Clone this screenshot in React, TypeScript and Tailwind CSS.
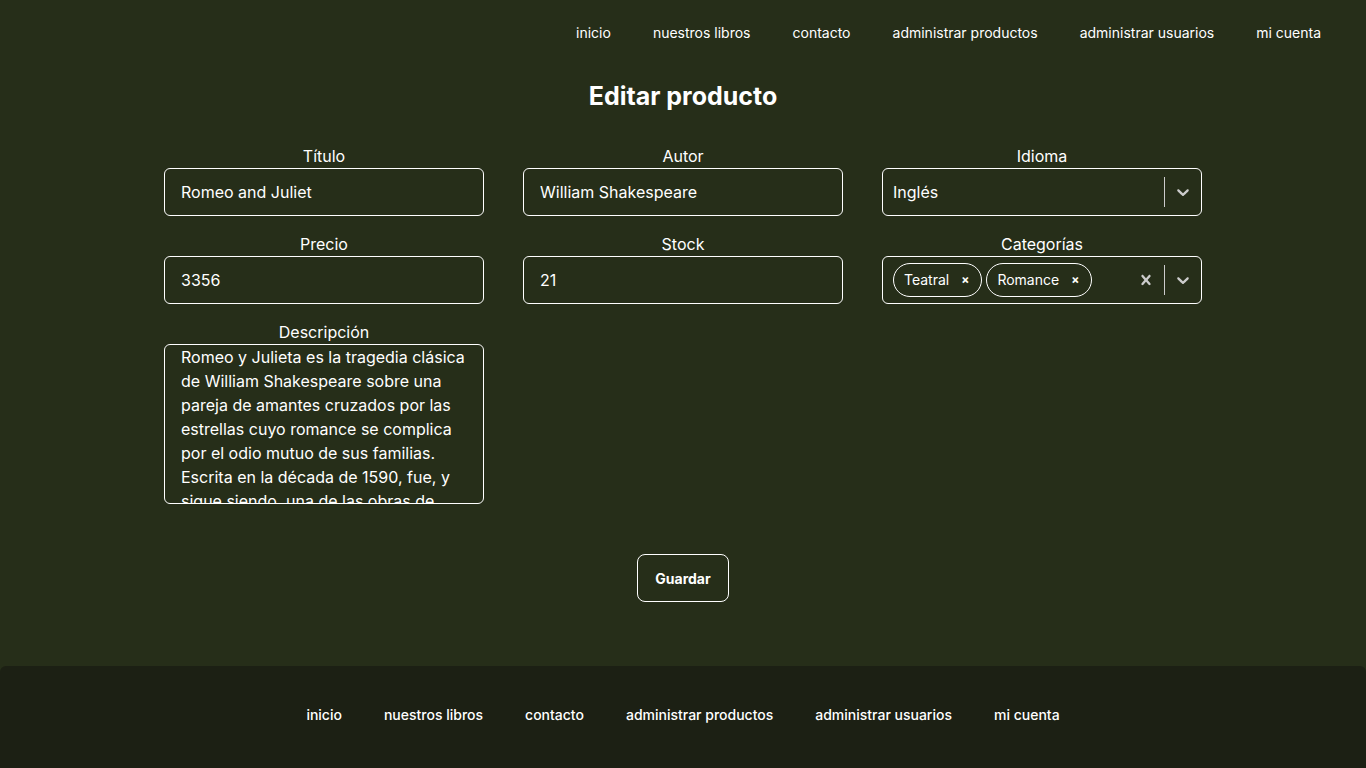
import React from "react";

const links = ["inicio", "nuestros libros", "contacto", "administrar productos", "administrar usuarios", "mi cuenta"];

const descripcion =
    "Romeo y Julieta es la tragedia clásica de William Shakespeare sobre una pareja de amantes cruzados por las estrellas cuyo romance se complica por el odio mutuo de sus familias. Escrita en la década de 1590, fue, y sigue siendo, una de las obras de Shakespeare más populares y representadas en todo el mundo.";

function Chevron() {
    return (
        <svg viewBox="0 0 20 20" width="20" height="20" fill="#cccccc">
            <path d="M4.516 7.548c0.436-0.446 1.043-0.481 1.576 0l3.908 3.747 3.908-3.747c0.533-0.481 1.141-0.446 1.574 0 0.436 0.445 0.408 1.197 0 1.615-0.406 0.418-4.695 4.502-4.695 4.502-0.217 0.223-0.502 0.335-0.787 0.335s-0.57-0.112-0.789-0.335c0 0-4.287-4.084-4.695-4.502s-0.436-1.17 0-1.615z" />
        </svg>
    );
}

function Cross() {
    return (
        <svg viewBox="0 0 20 20" width="20" height="20" fill="#cccccc">
            <path d="M14.348 14.849c-0.469 0.469-1.229 0.469-1.697 0l-2.651-3.030-2.651 3.029c-0.469 0.469-1.229 0.469-1.697 0-0.469-0.469-0.469-1.229 0-1.697l2.758-3.15-2.759-3.152c-0.469-0.469-0.469-1.228 0-1.697s1.228-0.469 1.697 0l2.652 3.031 2.651-3.031c0.469-0.469 1.228-0.469 1.697 0s0.469 1.229 0 1.697l-2.758 3.152 2.758 3.15c0.469 0.469 0.469 1.229 0 1.698z" />
        </svg>
    );
}

function Field({label, children}: {label: string; children: React.ReactNode}) {
    return (
        <div className="flex flex-col">
            <label className="text-center text-base leading-6">{label}</label>
            {children}
        </div>
    );
}

function TextInput({value}: {value: string}) {
    return (
        <input
            readOnly
            value={value}
            className="h-12 w-full rounded-md border border-white bg-transparent px-4 text-base text-white outline-none"
        />
    );
}

function Chip({text}: {text: string}) {
    return (
        <div className="flex h-[34px] items-center rounded-full border border-white pl-[10px] pr-3 text-sm">
            <span>{text}</span>
            <span className="ml-3 text-xs font-bold">×</span>
        </div>
    );
}

export default function App() {
    return (
        <div
            className="flex min-h-screen flex-col bg-[#262e19] text-white"
            style={{fontFamily: "Inter, 'Noto Sans', sans-serif"}}
        >
            <header className="flex h-[66px] items-center justify-end gap-[42px] pr-[45px] text-sm">
                {links.map((l) => (
                    <a key={l}>{l}</a>
                ))}
            </header>
            <main className="flex flex-col items-center">
                <h1 className="mt-[14px] text-[25px] leading-8 font-bold">Editar producto</h1>
                <div className="mt-8 grid w-[1038px] grid-cols-3 gap-x-[39px] gap-y-4">
                    <Field label="Título">
                        <TextInput value="Romeo and Juliet" />
                    </Field>
                    <Field label="Autor">
                        <TextInput value="William Shakespeare" />
                    </Field>
                    <Field label="Idioma">
                        <div className="flex h-12 items-center rounded-md border border-white">
                            <div className="flex-1 px-[10px] text-base">Inglés</div>
                            <div className="h-[30px] w-px bg-[#cccccc]" />
                            <div className="flex w-9 justify-center">
                                <Chevron />
                            </div>
                        </div>
                    </Field>
                    <Field label="Precio">
                        <TextInput value="3356" />
                    </Field>
                    <Field label="Stock">
                        <TextInput value="21" />
                    </Field>
                    <Field label="Categorías">
                        <div className="flex h-12 items-center rounded-md border border-white">
                            <div className="flex flex-1 items-center gap-1 pl-[10px]">
                                <Chip text="Teatral" />
                                <Chip text="Romance" />
                            </div>
                            <div className="flex w-9 justify-center">
                                <Cross />
                            </div>
                            <div className="h-[30px] w-px bg-[#cccccc]" />
                            <div className="flex w-9 justify-center">
                                <Chevron />
                            </div>
                        </div>
                    </Field>
                    <Field label="Descripción">
                        <textarea
                            readOnly
                            value={descripcion}
                            className="h-40 w-full resize-none overflow-hidden rounded-md border border-white bg-transparent px-4 pt-0 text-base leading-6 text-white outline-none"
                        />
                    </Field>
                </div>
                <button className="mt-[50px] mb-16 h-12 w-[92px] rounded-lg border border-white pt-0.5 text-sm font-bold">
                    Guardar
                </button>
            </main>
            <footer className="mt-auto flex h-[102px] items-center justify-center gap-[42px] rounded-t-md bg-[#1c2014] pb-1 text-sm font-medium">
                {links.map((l) => (
                    <a key={l}>{l}</a>
                ))}
            </footer>
        </div>
    );
}
